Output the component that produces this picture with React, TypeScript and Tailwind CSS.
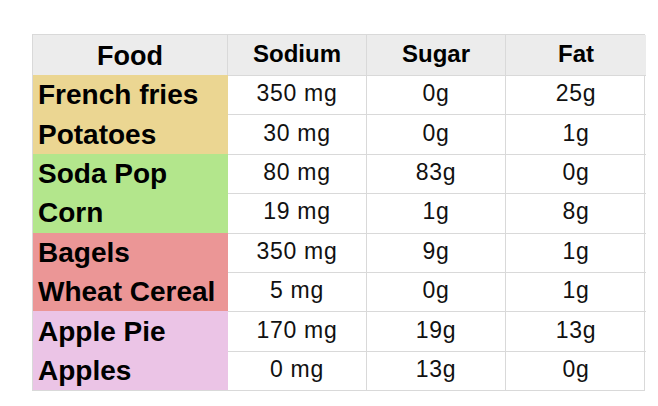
import { Fragment } from "react";

const rows = [
  { food: "French fries", sodium: "350 mg", sugar: "0g", fat: "25g", tone: "bg-[#ebd692]" },
  { food: "Potatoes", sodium: "30 mg", sugar: "0g", fat: "1g", tone: "bg-[#ebd692]" },
  { food: "Soda Pop", sodium: "80 mg", sugar: "83g", fat: "0g", tone: "bg-[#b3e68c]" },
  { food: "Corn", sodium: "19 mg", sugar: "1g", fat: "8g", tone: "bg-[#b3e68c]" },
  { food: "Bagels", sodium: "350 mg", sugar: "9g", fat: "1g", tone: "bg-[#eb9696]" },
  { food: "Wheat Cereal", sodium: "5 mg", sugar: "0g", fat: "1g", tone: "bg-[#eb9696]" },
  { food: "Apple Pie", sodium: "170 mg", sugar: "19g", fat: "13g", tone: "bg-[#ebc4e6]" },
  { food: "Apples", sodium: "0 mg", sugar: "13g", fat: "0g", tone: "bg-[#ebc4e6]" },
];

export default function App() {
  return (
    <div className="w-[658px] h-[406px] bg-white pl-[32px] pt-[34px] font-['Liberation_Sans',Arial,sans-serif] text-[#111]">
      <div className="w-[613px] grid grid-cols-[195px_139px_139px_140px] grid-rows-[40px_repeat(8,39.4px)] border border-[#d9d9d9] leading-none">
        <div className="bg-[#ececec] border-r border-[#d9d9d9] flex items-center justify-center text-[27px] font-bold text-black pt-[2px]">
          Food
        </div>
        {["Sodium", "Sugar", "Fat"].map((h, i) => (
          <div
            key={h}
            className={`bg-[#ececec] ${i < 2 ? "border-r" : ""} border-[#d9d9d9] flex items-center justify-center text-[24px] font-bold text-black pb-[2px]`}
          >
            {h}
          </div>
        ))}
        {rows.map((r) => (
          <Fragment key={r.food}>
            <div className={`${r.tone} flex items-center pl-[5px] pt-[1px] text-[28px] font-bold text-black whitespace-nowrap`}>
              {r.food}
            </div>
            <div className="border-t border-r border-[#d9d9d9] flex items-center justify-center text-[23px] tracking-[0.03em] pb-[3px]">
              {r.sodium}
            </div>
            <div className="border-t border-r border-[#d9d9d9] flex items-center justify-center text-[23px] tracking-[0.03em] pb-[3px]">
              {r.sugar}
            </div>
            <div className="border-t border-[#d9d9d9] flex items-center justify-center text-[23px] tracking-[0.03em] pb-[3px]">
              {r.fat}
            </div>
          </Fragment>
        ))}
      </div>
    </div>
  );
}
